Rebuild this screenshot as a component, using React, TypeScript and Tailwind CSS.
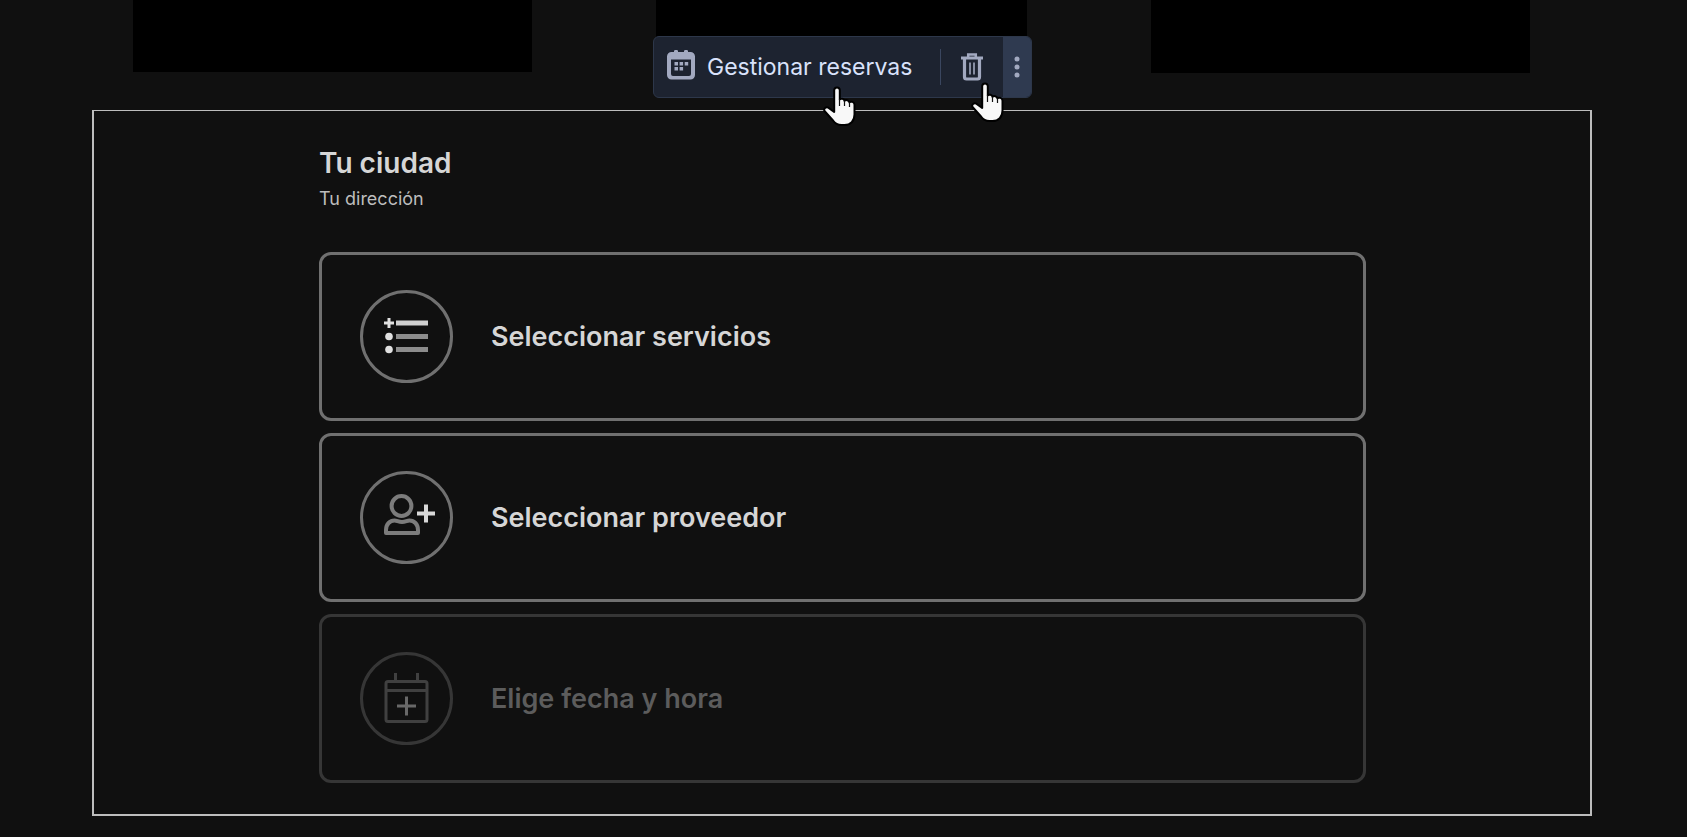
import type { ReactNode } from "react";

function HandPointer({ className }: { className: string }) {
  return (
    <svg className={className} width="36" height="44" viewBox="0 0 36 44" aria-hidden="true">
      <path
        d="M15 3.500c1.800 0 2.800 1.200 2.800 2.800v9.200c1-1.300 4.400-.9 4.700 1.300c1-1.200 4.500-.8 4.900 1.400c1.400-1 5.100-.6 5.100 2.600V30.500c0 6.500-4 10.500-10 10.500h-3c-4 0-6.500-1.500-8.500-4.500L2.500 27c-1.300-2.500 1.500-4.600 3.800-3.400L12.200 28V6.300c0-1.600 1-2.800 2.800-2.800z"
        fill="#f8f8f8"
        stroke="#000"
        strokeWidth="2"
        strokeLinejoin="round"
      />
      <path d="M17.500 15v7M22.500 17v5M27.500 18.500v4.500" stroke="#111" strokeWidth="1.200" fill="none" />
    </svg>
  );
}

function CalendarIcon() {
  return (
    <svg width="28" height="30" viewBox="0 0 28 30" fill="#a2a9c0" aria-hidden="true">
      <path
        fillRule="evenodd"
        d="M7 1.200a1.200 1.200 0 0 1 1.200-1.200h1.600A1.200 1.200 0 0 1 11 1.200v.8h6v-.8A1.200 1.200 0 0 1 18.200 0h1.600A1.200 1.200 0 0 1 21 1.200v.8h2.500A4.500 4.500 0 0 1 28 6.500V25a4.500 4.500 0 0 1-4.500 4.500h-19A4.500 4.500 0 0 1 0 25V6.500A4.500 4.500 0 0 1 4.500 2H7zM4 9.500V24a2 2 0 0 0 2 2h16a2 2 0 0 0 2-2V9.500z"
      />
      <path d="M7.500 12h3.500v3.500H7.500zM12.600 12h3.500v3.500h-3.500zM17.700 12h3.500v3.500h-3.500zM7.500 17h3.500v3.500H7.500zM12.600 17h3.500v3.500h-3.500z" />
    </svg>
  );
}

function TrashIcon() {
  return (
    <svg width="22" height="28" viewBox="0 0 22 28" fill="none" stroke="#a2a9c0" aria-hidden="true">
      <path d="M0 5h22" strokeWidth="3" />
      <path d="M7.200 4V1.500h7.600V4" strokeWidth="2.500" />
      <path d="M3.500 6v18a2 2 0 0 0 2 2h11a2 2 0 0 0 2-2V6" strokeWidth="3.200" />
      <path d="M9 9.500v12M13 9.500v12" strokeWidth="1.600" />
    </svg>
  );
}

function ListIcon() {
  return (
    <svg width="93" height="93" viewBox="0 0 93 93" aria-hidden="true">
      <path d="M24 33h10M29 28v10" stroke="#e0e0e0" strokeWidth="3" />
      <path d="M36 33h32" stroke="#d0d0d0" strokeWidth="5" />
      <path d="M36 46.500h32M36 59.500h32" stroke="#8c8c8c" strokeWidth="5" />
      <circle cx="29" cy="46.500" r="3.800" fill="#e0e0e0" />
      <circle cx="29" cy="59.500" r="3.800" fill="#e0e0e0" />
    </svg>
  );
}

function PersonIcon() {
  return (
    <svg width="93" height="93" viewBox="0 0 93 93" fill="none" aria-hidden="true">
      <circle cx="41.500" cy="35" r="9.900" stroke="#7c7c7c" strokeWidth="4" />
      <path
        d="M26 62v-3c0-6 4-9.500 8.500-9.500c2.500 0 4 1.500 7.500 1.500s5-1.500 7.500-1.500c4.500 0 8.500 3.500 8.500 9.500v3z"
        stroke="#7c7c7c"
        strokeWidth="4"
        strokeLinejoin="round"
      />
      <path d="M57 42.500h18M66 33.500v18" stroke="#d8d8d8" strokeWidth="4" />
    </svg>
  );
}

function DateIcon() {
  return (
    <svg width="93" height="93" viewBox="0 0 93 93" fill="none" aria-hidden="true">
      <rect x="26" y="29.500" width="41" height="40" rx="2" stroke="#404040" strokeWidth="3" />
      <path d="M26 38.500h41M35.500 21v8M57.500 21v8" stroke="#404040" strokeWidth="3" />
      <path d="M37 54h19M46.500 44.500v19" stroke="#686868" strokeWidth="3" />
    </svg>
  );
}

function StepCard({ title, icon, disabled = false }: { title: string; icon: ReactNode; disabled?: boolean }) {
  return (
    <button
      type="button"
      disabled={disabled}
      className={
        disabled
          ? "flex w-full items-center gap-[38px] rounded-xl border-3 border-[#363636] p-[35px] text-left text-[#5c5c5c]"
          : "flex w-full items-center gap-[38px] rounded-xl border-3 border-[#707070] p-[35px] text-left text-[#d6d6d6]"
      }
    >
      <span
        className={
          disabled
            ? "ml-[3px] flex size-[93px] shrink-0 items-center justify-center rounded-full border-3 border-[#363636]"
            : "ml-[3px] flex size-[93px] shrink-0 items-center justify-center rounded-full border-3 border-[#707070]"
        }
      >
        <span className="-m-1 shrink-0">{icon}</span>
      </span>
      <span className="text-[27px] leading-8 font-semibold">{title}</span>
    </button>
  );
}

function Toolbar() {
  return (
    <div
      role="toolbar"
      aria-label="Gestionar reservas"
      className="absolute top-9 left-[653px] flex h-[62px] items-stretch overflow-hidden rounded-md border border-[#2d374a] bg-[#1d2330]"
    >
      <button type="button" className="flex items-center gap-3 pl-[13px] text-[23px] text-[#d9e2fb]">
        <span className="pb-1">
          <CalendarIcon />
        </span>
        <span className="whitespace-nowrap">Gestionar reservas</span>
      </button>
      <span className="my-3 ml-7 w-px bg-[#3a465f]" />
      <button type="button" aria-label="Eliminar" className="flex w-[62px] items-center justify-center">
        <TrashIcon />
      </button>
      <button type="button" aria-label="Más opciones" className="flex w-7 items-center justify-center bg-[#2f3a50]">
        <svg width="6" height="22" viewBox="0 0 6 22" fill="#a2a9c0" aria-hidden="true">
          <circle cx="3" cy="3" r="2.500" />
          <circle cx="3" cy="11" r="2.500" />
          <circle cx="3" cy="19" r="2.500" />
        </svg>
      </button>
    </div>
  );
}

export default function App() {
  return (
    <div className="relative min-h-screen bg-[#101010] font-['Inter',sans-serif] text-[#d6d6d6]">
      <div className="flex h-[110px] items-start justify-between pr-[157px] pl-[133px]">
        <div className="h-[72px] w-[399px] bg-black" />
        <div className="h-[72px] w-[371px] bg-black" />
        <div className="h-[73px] w-[379px] bg-black" />
      </div>
      <main className="mr-[95px] ml-[92px] border-2 border-t border-[#bdbdbd] pt-9 pr-[224px] pb-[31px] pl-[225px]">
        <h1 className="text-[28px] leading-8 font-semibold">Tu ciudad</h1>
        <p className="pt-1.5 text-lg leading-7 text-[#bdbdbd]">Tu dirección</p>
        <div className="mt-[39px] flex flex-col gap-3">
          <StepCard title="Seleccionar servicios" icon={<ListIcon />} />
          <StepCard title="Seleccionar proveedor" icon={<PersonIcon />} />
          <StepCard title="Elige fecha y hora" icon={<DateIcon />} disabled />
        </div>
      </main>
      <Toolbar />
      <HandPointer className="absolute top-[84px] left-[822px]" />
      <HandPointer className="absolute top-[80px] left-[970px]" />
    </div>
  );
}
